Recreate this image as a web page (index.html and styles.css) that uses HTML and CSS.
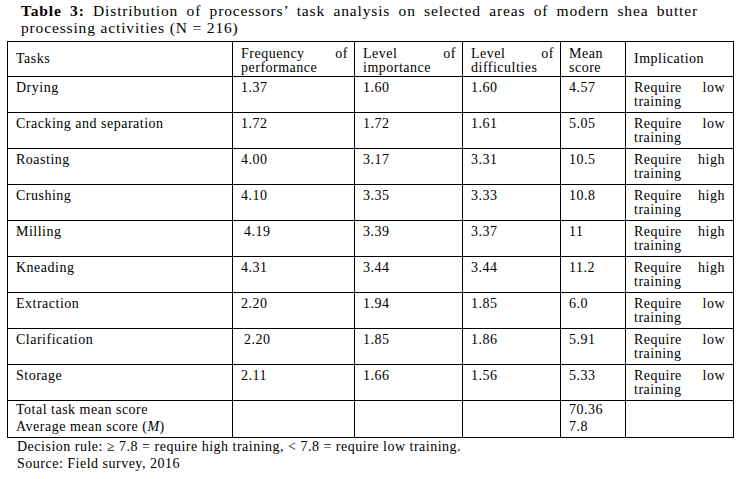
FILE: index.html
```html
<!DOCTYPE html>
<html>
<head>
<meta charset="utf-8">
<link rel="stylesheet" href="styles.css">
</head>
<body>
<div class="page">
  <div class="title">
    <div class="title-line"><b>Table 3:</b> Distribution of processors’ task analysis on selected areas of modern shea butter</div>
    <div class="title-last">processing activities (N = 216)</div>
  </div>
  <table class="data">
    <colgroup>
      <col class="c1"><col class="c2"><col class="c3"><col class="c4"><col class="c5"><col class="c6">
    </colgroup>
    <thead>
      <tr class="head">
        <th class="mid">Tasks</th>
        <th>Frequency of performance</th>
        <th>Level of importance</th>
        <th>Level of difficulties</th>
        <th>Mean score</th>
        <th class="mid">Implication</th>
      </tr>
    </thead>
    <tbody>
      <tr><td>Drying</td><td>1.37</td><td>1.60</td><td>1.60</td><td>4.57</td><td class="imp">Require low training</td></tr>
      <tr><td>Cracking and separation</td><td>1.72</td><td>1.72</td><td>1.61</td><td>5.05</td><td class="imp">Require low training</td></tr>
      <tr><td>Roasting</td><td>4.00</td><td>3.17</td><td>3.31</td><td>10.5</td><td class="imp">Require high training</td></tr>
      <tr><td>Crushing</td><td>4.10</td><td>3.35</td><td>3.33</td><td>10.8</td><td class="imp">Require high training</td></tr>
      <tr><td>Milling</td><td><span class="lead">4.19</span></td><td>3.39</td><td>3.37</td><td>11</td><td class="imp">Require high training</td></tr>
      <tr><td>Kneading</td><td>4.31</td><td>3.44</td><td>3.44</td><td>11.2</td><td class="imp">Require high training</td></tr>
      <tr><td>Extraction</td><td>2.20</td><td>1.94</td><td>1.85</td><td>6.0</td><td class="imp">Require low training</td></tr>
      <tr><td>Clarification</td><td><span class="lead">2.20</span></td><td>1.85</td><td>1.86</td><td>5.91</td><td class="imp">Require low training</td></tr>
      <tr><td>Storage</td><td>2.11</td><td>1.66</td><td>1.56</td><td>5.33</td><td class="imp">Require low training</td></tr>
      <tr class="total"><td>Total task mean score<br>Average mean score (<i>M</i>)</td><td></td><td></td><td></td><td>70.36<br>7.8</td><td></td></tr>
    </tbody>
  </table>
  <div class="notes">
    <div>Decision rule: ≥ 7.8 = require high training, &lt; 7.8 = require low training.</div>
    <div>Source: Field survey, 2016</div>
  </div>
</div>
</body>
</html>
```
FILE: styles.css
```css
html, body {
  margin: 0;
  padding: 0;
  background: #fff;
}
.page {
  font-family: "Liberation Serif", "Times New Roman", serif;
  color: #000;
  padding: 3px 0 0 7px;
}
.title {
  font-size: 15.5px;
  line-height: 16.5px;
  letter-spacing: 0.85px;
  padding-left: 14px;
  width: 677px;
  margin-bottom: 5px;
}
.title-line {
  text-align: justify;
  text-align-last: justify;
}
.title b {
  font-weight: bold;
}
.data {
  border-collapse: collapse;
  table-layout: fixed;
  width: 726px;
  font-size: 14px;
  letter-spacing: 0.5px;
  line-height: 13.5px;
}
.c1 { width: 225px; }
.c2 { width: 122px; }
.c3 { width: 108px; }
.c4 { width: 98px; }
.c5 { width: 65px; }
.c6 { width: 108px; }
.data th, .data td {
  border: 1px solid #000;
  padding: 4px 6px 0 8px;
  text-align: justify;
  vertical-align: top;
  font-weight: normal;
}
.data th {
  padding-top: 5px;
}
.data th.mid {
  vertical-align: middle;
  padding-top: 1px;
  padding-bottom: 1px;
}
.head {
  height: 35px;
}
.data tbody tr {
  height: 36px;
}
.data .imp {
  padding-right: 8px;
}
.lead {
  padding-left: 3px;
}
.data tr.total {
  height: 37px;
}
.total td {
  line-height: 17px;
  padding-top: 0;
}
.notes {
  font-size: 14px;
  letter-spacing: 0.5px;
  line-height: 17px;
  padding-left: 10px;
}
```
